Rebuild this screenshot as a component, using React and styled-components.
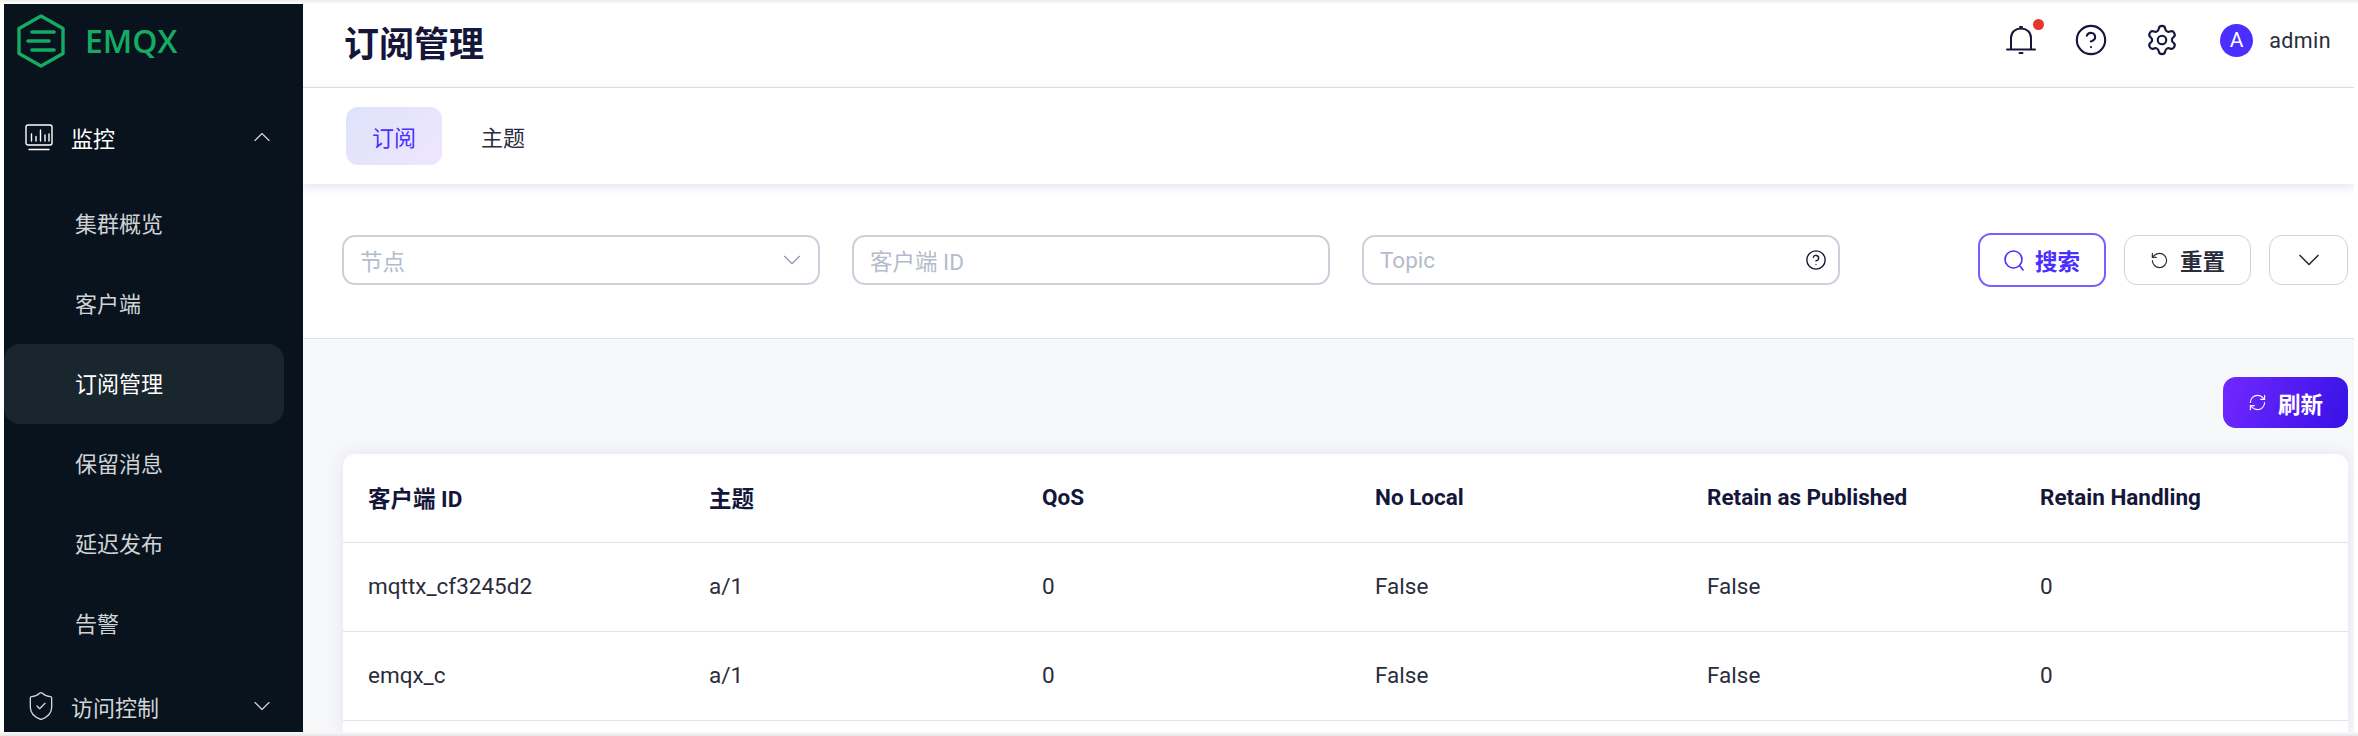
import React from 'react';
import styled, { createGlobalStyle } from 'styled-components';
import { ChevronDown, ChevronUp, CircleHelp, RefreshCw, RotateCcw, Settings, ShieldCheck } from 'lucide-react';

const GlobalStyle = createGlobalStyle`
  html, body {
    margin: 0;
    padding: 0;
    overflow: hidden;
    background: #fff;
    font-family: Roboto, "Noto Sans CJK SC", sans-serif;
  }
  * {
    box-sizing: border-box;
  }
`;

const Frame = styled.div`
  width: 2358px;
  height: 736px;
  padding: 4px;
  display: flex;
  background: linear-gradient(#ececec, #fff 4px, #fff 731px, #e6e6e6);
`;

const Sidebar = styled.aside`
  width: 299px;
  height: 728px;
  flex: none;
  overflow: hidden;
  background: #08131e;
`;

const Logo = styled.div`
  height: 94px;
  padding: 10px 0 0 13px;
  display: flex;
  align-items: flex-start;
  gap: 20px;
`;

const LogoText = styled.span`
  font-family: "Open Sans", sans-serif;
  font-size: 32px;
  font-weight: 600;
  line-height: 48px;
  margin-top: 3px;
  color: #16ab63;
`;

const ParentItem = styled.div`
  height: 80px;
  margin-top: ${(p) => p.$top || 0}px;
  padding: 0 27px 2px 21px;
  display: flex;
  align-items: center;
  font-size: 22px;
  color: ${(p) => (p.$open ? '#fff' : '#d3d6d8')};
  svg {
    flex: none;
  }
`;

const ParentLabel = styled.span`
  flex: 1;
  margin-left: ${(p) => p.$gap}px;
`;

const SubMenu = styled.div`
  padding-top: 6px;
`;

const SubItem = styled.div`
  height: 80px;
  margin-right: 19px;
  padding: 0 0 5px 71px;
  display: flex;
  align-items: center;
  font-size: 22px;
  border-radius: 16px;
  color: ${(p) => (p.$active ? '#fff' : '#cfd3d6')};
  background: ${(p) => (p.$active ? '#1a262e' : 'transparent')};
`;

const Main = styled.main`
  flex: 1;
  height: 728px;
  overflow: hidden;
  display: flex;
  flex-direction: column;
  background: #f7f8fa;
`;

const Header = styled.header`
  height: 84px;
  flex: none;
  padding: 0 23px 0 41px;
  display: flex;
  align-items: center;
  background: #fff;
  border-bottom: 1px solid #dcdde6;
`;

const Title = styled.h1`
  flex: 1;
  margin: 0 0 8px;
  font-size: 35px;
  font-weight: 700;
  color: #14163a;
`;

const HeaderIcons = styled.div`
  display: flex;
  align-items: center;
  margin-bottom: 11px;
`;

const BellWrap = styled.div`
  position: relative;
  width: 30px;
  height: 30px;
  margin-right: 38px;
`;

const RedDot = styled.span`
  position: absolute;
  top: -6px;
  right: -8px;
  width: 11px;
  height: 11px;
  border-radius: 50%;
  background: #e8352e;
`;

const IconSlot = styled.div`
  display: flex;
  margin-right: ${(p) => p.$right}px;
  color: #14163a;
`;

const Avatar = styled.span`
  width: 33px;
  height: 33px;
  border-radius: 50%;
  margin-right: 16px;
  display: flex;
  align-items: center;
  justify-content: center;
  font-size: 21px;
  color: #fff;
  background: #4a2fff;
`;

const UserName = styled.span`
  font-size: 21.5px;
  letter-spacing: 0.4px;
  color: #2b2d3c;
`;

const TabBar = styled.nav`
  position: relative;
  height: 96px;
  flex: none;
  padding: 19px 0 0 43px;
  display: flex;
  align-items: flex-start;
  gap: 13px;
  background: #fff;
  box-shadow: 0 3px 10px rgba(190, 195, 225, 0.45);
`;

const Tab = styled.div`
  height: 58px;
  padding: 0 26px;
  display: flex;
  align-items: center;
  font-size: 22px;
  border-radius: 12px;
  color: ${(p) => (p.$active ? '#4a2fff' : '#2b2d3c')};
  background: ${(p) => (p.$active ? 'linear-gradient(135deg, #dfe2fb, #eee6fe)' : 'transparent')};
`;

const FilterBar = styled.section`
  height: 155px;
  flex: none;
  padding: 0 6px 2px 39px;
  display: flex;
  align-items: center;
  gap: 32px;
  background: #fff;
  border-bottom: 1px solid #dde2f0;
`;

const Field = styled.div`
  width: 478px;
  height: 50px;
  padding: 0 11px 0 16px;
  display: flex;
  align-items: center;
  justify-content: space-between;
  font-size: 22.5px;
  color: #b4bbcb;
  border: 2px solid #cdd0db;
  border-radius: 13px;
`;

const FieldArrow = styled(ChevronDown)`
  margin-right: 0;
`;

const FilterButtons = styled.div`
  margin-left: auto;
  display: flex;
  align-items: center;
  gap: 18px;
`;

const OutlineButton = styled.div`
  width: ${(p) => p.$width}px;
  height: ${(p) => (p.$focus ? 54 : 50)}px;
  display: flex;
  align-items: center;
  justify-content: center;
  gap: 11px;
  font-size: 22.5px;
  font-weight: 700;
  border-radius: 13px;
  color: ${(p) => (p.$focus ? '#4a2fff' : '#2b2d3c')};
  border: ${(p) => (p.$focus ? '2px solid #7a5cff' : '1px solid #cfd0dc')};
`;

const Content = styled.div`
  flex: 1;
  padding: 38px 6px 0 40px;
  display: flex;
  flex-direction: column;
  align-items: flex-end;
`;

const RefreshButton = styled.div`
  width: 125px;
  height: 51px;
  flex: none;
  margin-bottom: 26px;
  display: flex;
  align-items: center;
  justify-content: center;
  gap: 11px;
  font-size: 22.5px;
  font-weight: 700;
  color: #fff;
  border-radius: 13px;
  background: linear-gradient(110deg, #7228ff, #3612e6);
`;

const TableCard = styled.div`
  width: 100%;
  flex: 1;
  background: #fff;
  border-radius: 12px 12px 0 0;
  box-shadow: 0 0 18px rgba(200, 205, 232, 0.45);
`;

const Row = styled.div`
  height: 89px;
  padding: 0 0 2px 25px;
  display: grid;
  grid-template-columns: 341px 333px 333px 332px 333px 1fr;
  align-items: center;
  font-size: 22.5px;
  font-weight: ${(p) => (p.$head ? 700 : 400)};
  color: ${(p) => (p.$head ? '#14163a' : '#2b2d3c')};
  border-bottom: 1px solid #dfe4f2;
`;

const columns = ['客户端 ID', '主题', 'QoS', 'No Local', 'Retain as Published', 'Retain Handling'];
const rows = [
  ['mqttx_cf3245d2', 'a/1', '0', 'False', 'False', '0'],
  ['emqx_c', 'a/1', '0', 'False', 'False', '0'],
];
const subItems = ['集群概览', '客户端', '订阅管理', '保留消息', '延迟发布', '告警'];

const LogoMark = () => (
  <svg width="48" height="54" viewBox="0 0 48 54" fill="none" stroke="#16ab63" strokeWidth="3.4" strokeLinecap="round" strokeLinejoin="round">
    <path d="M24 2 L46 14.5 V39.5 L24 52 L2 39.5 V14.5 Z" />
    <path d="M15 18 H37 M11 27 H32 M15 36 H37" strokeWidth="3.6" />
  </svg>
);

const MonitorIcon = () => (
  <svg width="28" height="27" viewBox="0 0 28 27" fill="none" stroke="#fff" strokeWidth="1.4" strokeLinecap="round">
    <rect x="1" y="1" width="26" height="20" rx="2" />
    <path d="M4 25.5 H24 M6.5 10 V17 M11 12.5 V17 M15.5 6 V17 M20 11 V17 M24 10 V17" />
  </svg>
);

const BellIcon = () => (
  <svg width="30" height="30" viewBox="0 0 30 30" fill="none" stroke="#14163a" strokeWidth="2" strokeLinecap="round">
    <path d="M5 24 V13 C5 7 9.5 3.5 15 3.5 C20.5 3.5 25 7 25 13 V24" />
    <path d="M1 24.5 H29" />
    <path d="M13.5 28 H16.5" />
    <path d="M14 2 H16" />
  </svg>
);

const SearchIcon = () => (
  <svg width="20" height="21" viewBox="0 0 20 21" fill="none" stroke="#4a2fff" strokeWidth="1.6" strokeLinecap="round">
    <circle cx="9.5" cy="9.5" r="8.5" />
    <path d="M16 16 L19 20" />
  </svg>
);

export default function App() {
  return (
    <Frame>
      <GlobalStyle />
      <Sidebar>
        <Logo>
          <LogoMark />
          <LogoText>EMQX</LogoText>
        </Logo>
        <ParentItem $open>
          <MonitorIcon />
          <ParentLabel $gap={18}>监控</ParentLabel>
          <ChevronUp size={28} strokeWidth={1} color="#d3d6d8" />
        </ParentItem>
        <SubMenu>
          {subItems.map((item) => (
            <SubItem key={item} $active={item === '订阅管理'}>
              {item}
            </SubItem>
          ))}
        </SubMenu>
        <ParentItem $top={3}>
          <ShieldCheck size={32} strokeWidth={1} color="#d3d6d8" />
          <ParentLabel $gap={14}>访问控制</ParentLabel>
          <ChevronDown size={28} strokeWidth={1} color="#d3d6d8" />
        </ParentItem>
      </Sidebar>
      <Main>
        <Header>
          <Title>订阅管理</Title>
          <HeaderIcons>
            <BellWrap>
              <BellIcon />
              <RedDot />
            </BellWrap>
            <IconSlot $right={37}>
              <CircleHelp size={34} strokeWidth={1.5} />
            </IconSlot>
            <IconSlot $right={41}>
              <Settings size={34} strokeWidth={1.5} />
            </IconSlot>
            <Avatar>A</Avatar>
            <UserName>admin</UserName>
          </HeaderIcons>
        </Header>
        <TabBar>
          <Tab $active>订阅</Tab>
          <Tab>主题</Tab>
        </TabBar>
        <FilterBar>
          <Field>
            节点
            <FieldArrow size={30} strokeWidth={0.9} color="#8f93a3" />
          </Field>
          <Field>客户端 ID</Field>
          <Field>
            Topic
            <CircleHelp size={22} strokeWidth={1.5} color="#14163a" />
          </Field>
          <FilterButtons>
            <OutlineButton $focus $width={128}>
              <SearchIcon />
              搜索
            </OutlineButton>
            <OutlineButton $width={127}>
              <RotateCcw size={19} strokeWidth={1.5} />
              重置
            </OutlineButton>
            <OutlineButton $width={79}>
              <ChevronDown size={36} strokeWidth={1.1} />
            </OutlineButton>
          </FilterButtons>
        </FilterBar>
        <Content>
          <RefreshButton>
            <RefreshCw size={19} strokeWidth={1.4} />
            刷新
          </RefreshButton>
          <TableCard>
            <Row $head>
              {columns.map((col) => (
                <span key={col}>{col}</span>
              ))}
            </Row>
            {rows.map((row) => (
              <Row key={row[0]}>
                {row.map((cell, i) => (
                  <span key={i}>{cell}</span>
                ))}
              </Row>
            ))}
          </TableCard>
        </Content>
      </Main>
    </Frame>
  );
}
